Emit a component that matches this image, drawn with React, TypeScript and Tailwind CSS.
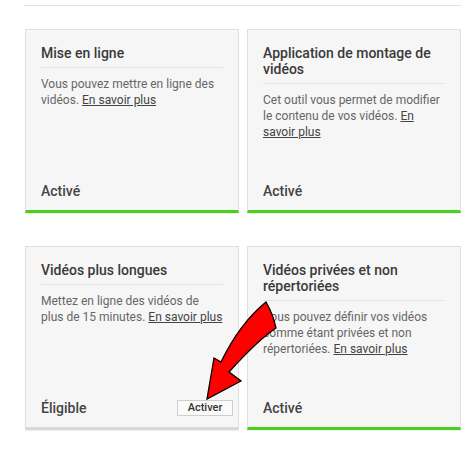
import React from 'react';

interface FeatureCardProps {
  title: string;
  text: string;
  status: string;
  enabled: boolean;
}

const FeatureCard: React.FC<FeatureCardProps> = ({ title, text, status, enabled }) => {
  return (
    <div
      className={`flex h-[184px] flex-col border border-[#e0e0e0] border-b-[3px] bg-[#f6f6f6] shadow-[0_1px_1px_rgba(0,0,0,0.06)] ${
        enabled ? 'border-b-[#48d21f]' : 'border-b-[#d9d9d9]'
      }`}
    >
      <div className="px-[15px] pt-[15px]">
        <h2 className="border-b border-[#e4e4e4] pb-[6px] text-[14px] font-medium leading-[16px] text-[#3a3a3a]">
          {title}
        </h2>
        <p className="mt-[8px] text-[12px] leading-[16px] text-[#666]">
          {text}{' '}
          <a href="#" className="text-[#444] underline">
            En savoir plus
          </a>
        </p>
      </div>
      <div className="mt-auto flex items-center justify-between pb-[11px] pl-[15px] pr-[5px]">
        <span className="text-[14px] font-medium leading-[16px] text-[#444]">{status}</span>
        {!enabled && (
          <button className="h-[16px] w-[56px] border border-[#cfcfcf] bg-[#fafafa] text-[11px] font-medium leading-[14px] text-[#333]">
            Activer
          </button>
        )}
      </div>
    </div>
  );
};

const cards: FeatureCardProps[] = [
  {
    title: 'Mise en ligne',
    text: 'Vous pouvez mettre en ligne des vidéos.',
    status: 'Activé',
    enabled: true,
  },
  {
    title: 'Application de montage de vidéos',
    text: 'Cet outil vous permet de modifier le contenu de vos vidéos.',
    status: 'Activé',
    enabled: true,
  },
  {
    title: 'Vidéos plus longues',
    text: 'Mettez en ligne des vidéos de plus de 15 minutes.',
    status: 'Éligible',
    enabled: false,
  },
  {
    title: 'Vidéos privées et non répertoriées',
    text: 'Vous pouvez définir vos vidéos comme étant privées et non répertoriées.',
    status: 'Activé',
    enabled: true,
  },
];

export default function App() {
  return (
    <div className="relative h-[452px] w-[469px] bg-white font-['Roboto',sans-serif]">
      <div className="ml-[24px] w-[437px] pt-[5px]">
        <div className="border-t border-[#e2e2e2]" />
      </div>
      <div className="ml-[25px] mt-[23px] grid w-[436px] grid-cols-2 gap-x-[8px] gap-y-[33px]">
        {cards.map((c) => (
          <FeatureCard key={c.title} {...c} />
        ))}
      </div>

      {/* red annotation arrow */}
      <svg className="pointer-events-none absolute left-0 top-0" width="469" height="452" viewBox="0 0 469 452">
        <path
          d="M266 302 Q273 314 276 328 Q258 340 229 372 L241 381 L207 399 L214 358 L221 362 Q240 323 266 302 Z"
          fill="#ff0000"
          stroke="#000"
          strokeWidth="1.3"
          strokeLinejoin="miter"
        />
      </svg>
    </div>
  );
}
